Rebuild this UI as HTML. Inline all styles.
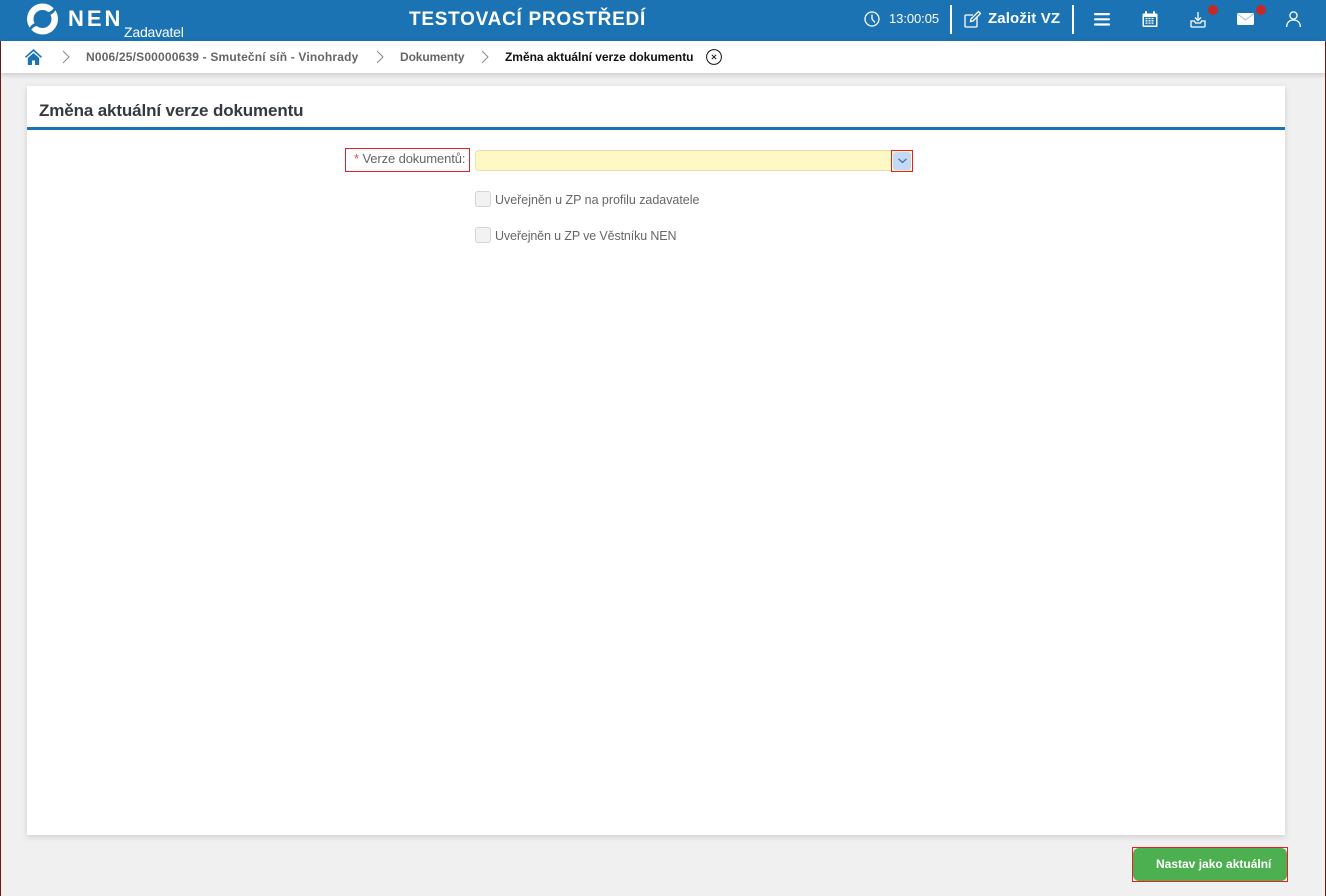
<!DOCTYPE html>
<html lang="cs"><head><meta charset="utf-8"><title>Změna aktuální verze dokumentu</title>
<style>
html,body{margin:0;padding:0}
body{width:1326px;height:896px;overflow:hidden;position:relative;background:#f0f0f0;font-family:"Liberation Sans",sans-serif}
.a{position:absolute;white-space:nowrap}
svg{position:absolute;overflow:visible}
</style></head><body>
<div class="a" style="left:0;top:0;width:1px;height:896px;background:#6e1a14"></div>
<div class="a" style="left:1325px;top:0;width:1px;height:896px;background:#6e1a14"></div>
<div class="a" style="left:0;top:0;width:1326px;height:41px;background:#1c73b3"></div>
<div class="a" style="left:1px;top:41px;width:1324px;height:32px;background:#fff;box-shadow:0 2px 5px rgba(0,0,0,.16)"></div>

<svg style="left:26px;top:2px" width="34" height="34" viewBox="0 0 34 34"><circle cx="16.500" cy="17" r="15.500" fill="#fff"/><circle cx="16.500" cy="17" r="9" fill="#1c73b3"/><path d="M22 10Q26 9.500 28.500 5L30 7Q28 11.500 24 13z" fill="#1c73b3"/><path d="M11 24Q7 24.500 4.500 29L3 27Q5 22.500 9 21z" fill="#1c73b3"/></svg>
<div class="a" style="left:68px;top:4px;font-size:22px;line-height:30px;font-weight:bold;color:#fff;letter-spacing:3px">NEN</div>
<div class="a" style="left:124px;top:24px;font-size:14px;line-height:17px;color:#fff;letter-spacing:-.2px">Zadavatel</div>
<div class="a" style="left:409px;top:7px;font-size:19px;line-height:25px;font-weight:bold;color:#fff;letter-spacing:.73px">TESTOVACÍ PROSTŘEDÍ</div>

<svg style="left:864px;top:11px" width="16" height="16" viewBox="0 0 16 16" fill="none" stroke="#fff" stroke-width="1.300"><circle cx="8" cy="8" r="7"/><path d="M8 3.500V8l3 3.500"/></svg>
<div class="a" style="left:889px;top:11px;font-size:13px;line-height:16px;color:#fff;letter-spacing:-.07px">13:00:05</div>
<div class="a" style="left:950px;top:5px;width:2px;height:29px;background:#fff"></div>
<svg style="left:964px;top:10px" width="18" height="18" viewBox="0 0 18 18" fill="none" stroke="#fff" stroke-width="1.300"><path d="M13 7.500V16a1 1 0 0 1-1 1H2a1 1 0 0 1-1-1V6a1 1 0 0 1 1-1h7"/><path d="M6.500 11.500L7 9l7.500-7.500 2 2L9 11z"/></svg>
<div class="a" style="left:988px;top:10px;font-size:15px;line-height:18px;font-weight:bold;color:#fff;letter-spacing:.13px">Založit VZ</div>
<div class="a" style="left:1072px;top:5px;width:2px;height:29px;background:#fff"></div>
<svg style="left:1094px;top:13px" width="16" height="13" viewBox="0 0 16 13" fill="#fff"><rect width="16" height="2.200" rx="1"/><rect y="5.200" width="16" height="2.200" rx="1"/><rect y="10.400" width="16" height="2.200" rx="1"/></svg>
<svg style="left:1142px;top:11px" width="16" height="16" viewBox="0 0 16 16"><path d="M1.500 2.500h13a1 1 0 0 1 1 1V15a1 1 0 0 1-1 1h-13a1 1 0 0 1-1-1V3.500a1 1 0 0 1 1-1z" fill="#fff"/><rect x="3" y="0" width="2" height="4" rx="1" fill="#fff"/><rect x="11" y="0" width="2" height="4" rx="1" fill="#fff"/><path d="M2 6h12v8.500H2z" fill="#1c73b3"/><path d="M3.500 7.500h9M3.500 9.800h9M3.500 12.100h9" stroke="#fff" stroke-width="1.300" stroke-dasharray="2 1"/></svg>
<svg style="left:1190px;top:11px" width="16" height="17" viewBox="0 0 16 17" fill="none" stroke="#fff" stroke-width="1.300"><path d="M8 1v8M5 6.500L8 9.500l3-3"/><path d="M1 10h3.500l1 2h5l1-2H15v5a1 1 0 0 1-1 1H2a1 1 0 0 1-1-1z"/></svg>
<div class="a" style="left:1208px;top:5px;width:10px;height:10px;border-radius:50%;background:#c62828"></div>
<svg style="left:1237px;top:13px" width="17" height="12" viewBox="0 0 17 12"><rect width="17" height="12" rx="1.500" fill="#fff"/><path d="M.5 1l8 6 8-6" fill="none" stroke="#9cc0dc" stroke-width="1"/></svg>
<div class="a" style="left:1256px;top:5px;width:10px;height:10px;border-radius:50%;background:#c62828"></div>
<svg style="left:1286px;top:11px" width="15" height="16" viewBox="0 0 15 16" fill="none" stroke="#fff" stroke-width="1.300"><circle cx="7.500" cy="4.500" r="3.600"/><path d="M.7 16c0-4.500 2.800-7 6.800-7s6.800 2.500 6.800 7"/></svg>

<svg style="left:25px;top:49px" width="17" height="16" viewBox="0 0 17 16"><path d="M8.500 0L0 7.800l1 1.100L8.500 2.200 16 8.900l1-1.100z" fill="#1c73b3"/><path d="M2.800 9l5.700-5 5.700 5v7H10v-4.500H7V16H2.800z" fill="#1c73b3"/></svg>
<svg style="left:62px;top:50px" width="9" height="14" fill="none" stroke="#8a8a8a"><path d="M1 1l6 6-6 6"/></svg>
<div class="a" style="left:86px;top:50px;font-size:12px;line-height:15px;font-weight:bold;color:#666;letter-spacing:.18px">N006/25/S00000639 - Smuteční síň - Vinohrady</div>
<svg style="left:376px;top:50px" width="9" height="14" fill="none" stroke="#8a8a8a"><path d="M1 1l6 6-6 6"/></svg>
<div class="a" style="left:400px;top:50px;font-size:12px;line-height:15px;font-weight:bold;color:#666;letter-spacing:-.1px">Dokumenty</div>
<svg style="left:481px;top:50px" width="9" height="14" fill="none" stroke="#8a8a8a"><path d="M1 1l6 6-6 6"/></svg>
<div class="a" style="left:505px;top:50px;font-size:12px;line-height:15px;font-weight:bold;color:#111;letter-spacing:-.03px">Změna aktuální verze dokumentu</div>
<svg style="left:706px;top:49px" width="16" height="16" viewBox="0 0 16 16" fill="none" stroke="#111"><circle cx="8" cy="8" r="7.400"/><path d="M5.800 5.800l4.400 4.400M10.200 5.800l-4.400 4.400"/></svg>

<div class="a" style="left:27px;top:86px;width:1258px;height:749px;background:#fff;box-shadow:0 2px 6px rgba(0,0,0,.14)"></div>
<div class="a" style="left:27px;top:127px;width:1258px;height:3px;background:#1c73b3"></div>
<div class="a" style="left:39px;top:100px;font-size:17px;line-height:22px;font-weight:bold;color:#343a40;letter-spacing:-.13px">Změna aktuální verze dokumentu</div>

<div class="a" style="left:345px;top:148px;width:123px;height:22px;border:1px solid #ee1c25"></div>
<div class="a" style="left:354px;top:151px;font-size:13px;line-height:16px;color:#666;letter-spacing:-.12px"><span style="color:#d9534f">*</span> Verze dokumentů:</div>
<div class="a" style="left:475px;top:150px;width:416px;height:19px;border:1px solid #e8dfa6;border-right:0;border-radius:4px 0 0 4px;background:#fef8c4"></div>
<div class="a" style="left:891px;top:150px;width:20px;height:20px;border:1px solid #ee1c25;background:#fef8c4"></div>
<div class="a" style="left:893px;top:152px;width:18px;height:18px;border-radius:3px;background:#c2daf7"></div>
<svg style="left:898px;top:158px" width="9" height="6" fill="none" stroke="#4a6f98" stroke-width="1.300"><path d="M.5 .8L4.500 4.500 8.500 .8"/></svg>

<div class="a" style="left:475px;top:191px;width:14px;height:14px;border:1px solid #d4d4d4;border-radius:3px;background:#f2f2f2"></div>
<div class="a" style="left:495px;top:192px;font-size:12.500px;line-height:16px;color:#666;letter-spacing:-.03px">Uveřejněn u ZP na profilu zadavatele</div>
<div class="a" style="left:475px;top:227px;width:14px;height:14px;border:1px solid #d4d4d4;border-radius:3px;background:#f2f2f2"></div>
<div class="a" style="left:495px;top:228px;font-size:12.500px;line-height:16px;color:#666;letter-spacing:-.13px">Uveřejněn u ZP ve Věstníku NEN</div>

<div class="a" style="left:1132px;top:847px;width:154px;height:33px;border:1px solid #ee1c25;background:#f0f0f0"></div>
<div class="a" style="left:1133px;top:848px;width:154px;height:33px;border-radius:6px;background:#4caf50"></div>
<div class="a" style="left:1156px;top:856px;font-size:12px;line-height:16px;font-weight:bold;color:#fff">Nastav jako aktuální</div>
</body></html>
